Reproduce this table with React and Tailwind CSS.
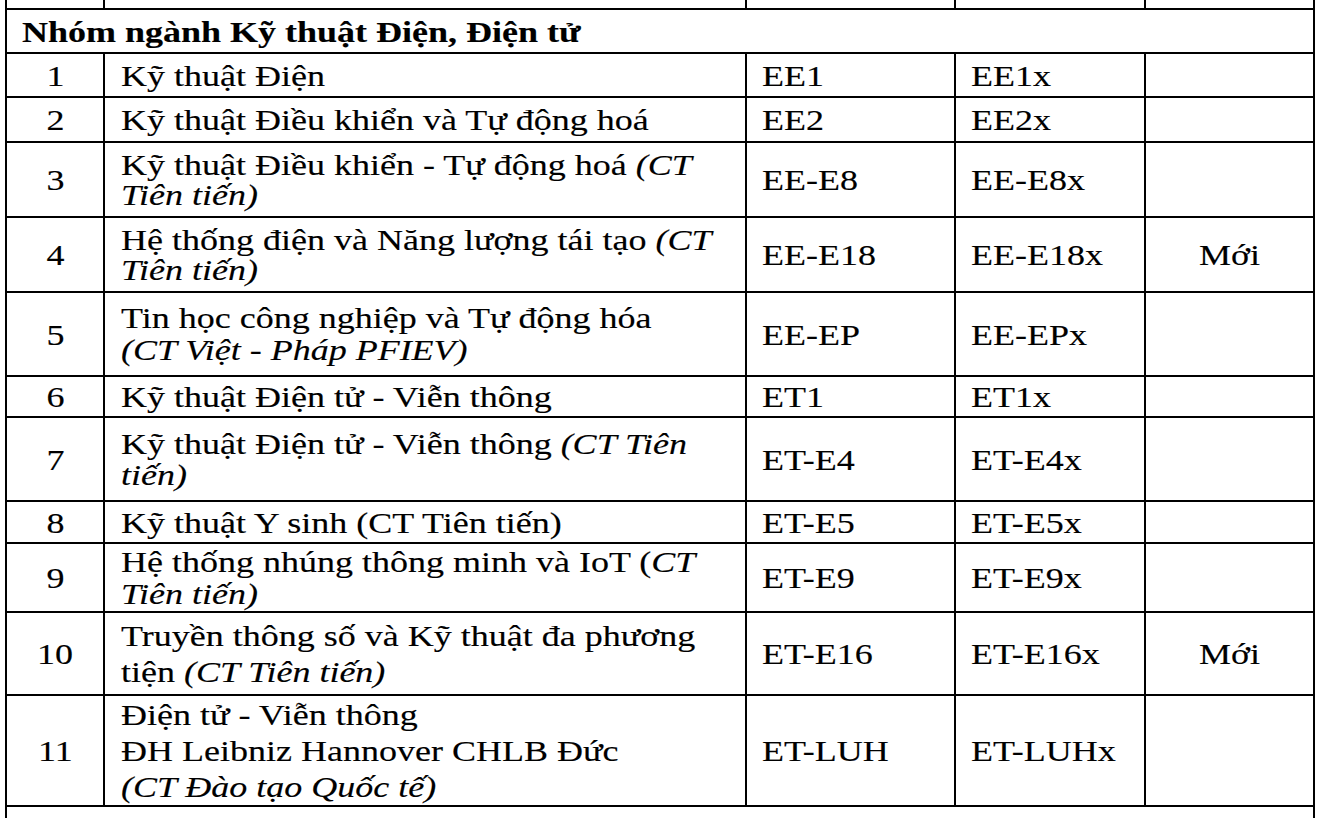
import React from "react";

const rows = [
  { no: "1", h: "h-[44px]", name: [["Kỹ thuật Điện"]], code: "EE1", alt: "EE1x" },
  { no: "2", h: "h-[45px]", name: [["Kỹ thuật Điều khiển và Tự động hoá"]], code: "EE2", alt: "EE2x" },
  {
    no: "3",
    h: "h-[75px]",
    lead: "leading-[30px]",
    name: [["Kỹ thuật Điều khiển - Tự động hoá ", { i: "(CT" }], [{ i: "Tiên tiến)" }]],
    code: "EE-E8",
    alt: "EE-E8x",
  },
  {
    no: "4",
    h: "h-[75px]",
    lead: "leading-[30px]",
    name: [["Hệ thống điện và Năng lượng tái tạo ", { i: "(CT" }], [{ i: "Tiên tiến)" }]],
    code: "EE-E18",
    alt: "EE-E18x",
    note: "Mới",
  },
  {
    no: "5",
    h: "h-[84px]",
    lead: "leading-[32px]",
    name: [["Tin học công nghiệp và Tự động hóa"], [{ i: "(CT Việt - Pháp PFIEV)" }]],
    code: "EE-EP",
    alt: "EE-EPx",
  },
  { no: "6", h: "h-[41px]", name: [["Kỹ thuật Điện tử - Viễn thông"]], code: "ET1", alt: "ET1x" },
  {
    no: "7",
    h: "h-[84px]",
    lead: "leading-[31px]",
    name: [["Kỹ thuật Điện tử - Viễn thông ", { i: "(CT Tiên" }], [{ i: "tiến)" }]],
    code: "ET-E4",
    alt: "ET-E4x",
  },
  { no: "8", h: "h-[42px]", name: [["Kỹ thuật Y sinh (CT Tiên tiến)"]], code: "ET-E5", alt: "ET-E5x" },
  {
    no: "9",
    h: "h-[69px]",
    lead: "leading-[32px]",
    name: [["Hệ thống nhúng thông minh và IoT (", { i: "CT" }], [{ i: "Tiên tiến)" }]],
    code: "ET-E9",
    alt: "ET-E9x",
  },
  {
    no: "10",
    h: "h-[83px]",
    lead: "leading-[36px]",
    name: [["Truyền thông số và Kỹ thuật đa phương"], ["tiện ", { i: "(CT Tiên tiến)" }]],
    code: "ET-E16",
    alt: "ET-E16x",
    note: "Mới",
  },
  {
    no: "11",
    h: "h-[111px]",
    lead: "leading-[36px]",
    name: [["Điện tử - Viễn thông"], ["ĐH Leibniz Hannover CHLB Đức"], [{ i: "(CT Đào tạo Quốc tế)" }]],
    code: "ET-LUH",
    alt: "ET-LUHx",
  },
];

const Line = ({ parts }) => (
  <div>
    {parts.map((p, k) =>
      typeof p === "string" ? (
        <span key={k}>{p}</span>
      ) : (
        <em key={k} className="italic">
          {p.i}
        </em>
      )
    )}
  </div>
);

// the source document is rendered a bit wider than it is tall
const Stretch = ({ children, center, lead = "leading-[31px]" }) => (
  <div
    className={`whitespace-nowrap scale-x-[1.2] ${lead} ${
      center ? "origin-center" : "origin-left"
    }`}
  >
    {children}
  </div>
);

const Row = ({ row }) => (
  <div className={`flex border-b-2 border-black ${row.h}`}>
    <div className="w-[98px] shrink-0 border-r-2 border-black flex items-center justify-center">
      <Stretch center>{row.no}</Stretch>
    </div>
    <div className="w-[642px] shrink-0 border-r-2 border-black flex items-center pl-4">
      <Stretch lead={row.lead}>
        {row.name.map((parts, k) => (
          <Line key={k} parts={parts} />
        ))}
      </Stretch>
    </div>
    <div className="w-[209px] shrink-0 border-r-2 border-black flex items-center pl-[15px]">
      <Stretch>{row.code}</Stretch>
    </div>
    <div className="w-[190px] shrink-0 border-r-2 border-black flex items-center pl-[15px]">
      <Stretch>{row.alt}</Stretch>
    </div>
    <div className="w-[167px] shrink-0 flex items-center justify-center">
      {row.note && <Stretch center>{row.note}</Stretch>}
    </div>
  </div>
);

export default function App() {
  return (
    <div className="w-[1324px] h-[818px] overflow-hidden bg-white text-black [font-family:'Liberation_Serif','Times_New_Roman',serif] text-[30px] [-webkit-text-stroke:0.15px_black]">
      <div className="ml-[5px] w-[1310px] border-x-2 border-black">
        {/* tail of the previous block */}
        <div className="flex h-[10px] border-b-2 border-black">
          <div className="w-[98px] shrink-0 border-r-2 border-black" />
          <div className="w-[642px] shrink-0 border-r-2 border-black" />
          <div className="w-[209px] shrink-0 border-r-2 border-black" />
          <div className="w-[190px] shrink-0 border-r-2 border-black" />
          <div className="w-[167px] shrink-0" />
        </div>

        <div className="h-[44px] border-b-2 border-black flex items-center pl-[15px]">
          <div className="whitespace-nowrap font-bold leading-[31px] scale-x-[1.2] origin-left">
            Nhóm ngành Kỹ thuật Điện, Điện tử
          </div>
        </div>

        {rows.map((row) => (
          <Row key={row.no} row={row} />
        ))}

        <div className="h-[40px]" />
      </div>
    </div>
  );
}
